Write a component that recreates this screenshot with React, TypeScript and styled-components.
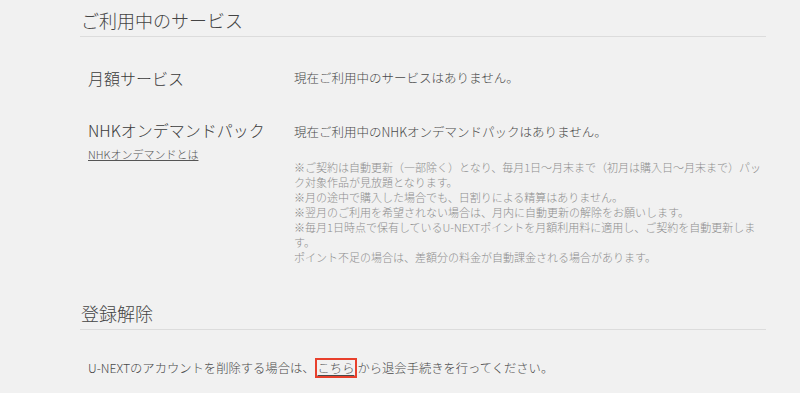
import React from 'react';
import styled, { createGlobalStyle } from 'styled-components';

const GlobalStyle = createGlobalStyle`
  html, body {
    margin: 0;
    padding: 0;
    background: #f1f1f1;
  }
  body {
    font-family: "Noto Sans CJK JP", "Noto Sans", sans-serif;
    font-weight: 300;
    color: #333;
  }
`;

const Page = styled.div`
  padding: 0 34px 0 80px;
`;

const Section = styled.section<{ $gap?: number }>`
  margin-top: ${({ $gap }) => $gap ?? 0}px;
`;

const SectionTitle = styled.h2`
  margin: 0;
  padding: 7px 0 3px 1px;
  font-size: 18px;
  line-height: 26px;
  font-weight: 300;
  color: #444;
  border-bottom: 1px solid #dcdcdc;
`;

const Row = styled.div<{ $top: number }>`
  display: grid;
  grid-template-columns: 206px 1fr;
  padding-left: 8px;
  margin-top: ${({ $top }) => $top}px;
`;

const LabelCol = styled.div`
  display: flex;
  flex-direction: column;
  align-items: flex-start;
`;

const Label = styled.div`
  font-size: 16px;
  line-height: 24px;
  color: #3a3a3a;
`;

const SubLink = styled.a`
  margin-top: 4px;
  font-size: 11px;
  line-height: 16px;
  color: #555;
  text-decoration: underline;
`;

const ValueCol = styled.div<{ $shift?: number }>`
  padding-top: ${({ $shift }) => $shift ?? 0}px;
`;

const Value = styled.p`
  margin: 0;
  font-size: 12.5px;
  line-height: 24px;
  color: #4a4a4a;
`;

const Notes = styled.div`
  margin-top: 16px;
  width: 472px;
  font-size: 11px;
  line-height: 15px;
  color: #8e8e8e;
`;

const Body = styled.p`
  margin: 28px 0 0;
  padding-left: 8px;
  font-size: 12.3px;
  line-height: 20px;
  color: #4a4a4a;
`;

const Boxed = styled.a`
  display: inline-block;
  padding: 0 1px;
  line-height: 16px;
  border: 2px solid #e8402c;
  color: #4a4a4a;
  text-decoration: underline;
  text-underline-offset: 2px;
`;

const notes = [
  '※ご契約は自動更新（一部除く）となり、毎月1日〜月末まで（初月は購入日〜月末まで）パック対象作品が見放題となります。',
  '※月の途中で購入した場合でも、日割りによる精算はありません。',
  '※翌月のご利用を希望されない場合は、月内に自動更新の解除をお願いします。',
  '※毎月1日時点で保有しているU-NEXTポイントを月額利用料に適用し、ご契約を自動更新します。',
  'ポイント不足の場合は、差額分の料金が自動課金される場合があります。',
];

export default function App() {
  return (
    <Page>
      <GlobalStyle />
      <Section>
        <SectionTitle>ご利用中のサービス</SectionTitle>
        <Row $top={29}>
          <LabelCol>
            <Label>月額サービス</Label>
          </LabelCol>
          <ValueCol>
            <Value>現在ご利用中のサービスはありません。</Value>
          </ValueCol>
        </Row>
        <Row $top={28}>
          <LabelCol>
            <Label>NHKオンデマンドパック</Label>
            <SubLink>NHKオンデマンドとは</SubLink>
          </LabelCol>
          <ValueCol $shift={2}>
            <Value>現在ご利用中のNHKオンデマンドパックはありません。</Value>
            <Notes>
              {notes.map((n) => (
                <div key={n}>{n}</div>
              ))}
            </Notes>
          </ValueCol>
        </Row>
      </Section>
      <Section $gap={28}>
        <SectionTitle>登録解除</SectionTitle>
        <Body>
          U-NEXTのアカウントを削除する場合は、<Boxed>こちら</Boxed>から退会手続きを行ってください。
        </Body>
      </Section>
    </Page>
  );
}
